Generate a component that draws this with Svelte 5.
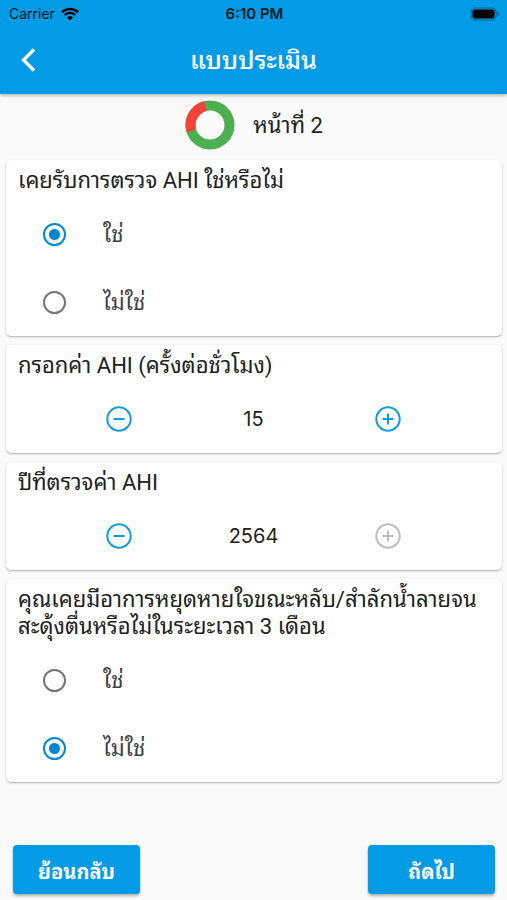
<script>
	const YEAR_MAX = 2564;

	let questions = $state([
		{ id: 'ahi-test', type: 'choice', title: 'เคยรับการตรวจ AHI ใช่หรือไม่', answer: 'ใช่' },
		{ id: 'ahi-value', type: 'number', title: 'กรอกค่า AHI (ครั้งต่อชั่วโมง)', value: 15, max: 200 },
		{ id: 'ahi-year', type: 'number', title: 'ปีที่ตรวจค่า AHI', value: 2564, max: YEAR_MAX },
		{
			id: 'apnea',
			type: 'choice',
			title: 'คุณเคยมีอาการหยุดหายใจขณะหลับ/สำลักน้ำลายจน\nสะดุ้งตื่นหรือไม่ในระยะเวลา 3 เดือน',
			answer: 'ไม่ใช่'
		}
	]);

	const options = ['ใช่', 'ไม่ใช่'];
</script>

<div class="screen">
	<header>
		<div class="status">
			<span class="carrier">
				Carrier
				<svg width="18" height="14" viewBox="0 0 18 14" aria-hidden="true">
					<path d="M1 5.2a11.5 11.5 0 0 1 16 0" />
					<path d="M3.8 8a7.5 7.5 0 0 1 10.4 0" />
					<path class="dot" d="M9 13.4 6.1 10.5a4.1 4.1 0 0 1 5.8 0z" />
				</svg>
			</span>
			<span class="time">6:10 PM</span>
			<svg class="battery" width="30" height="14" viewBox="0 0 30 14" aria-hidden="true">
				<rect class="shell" x="1" y="1" width="25" height="12" rx="3.5" />
				<rect x="2.5" y="2.5" width="22" height="9" rx="2" />
				<path class="cap" d="M27.5 4.5c2.4.8 2.4 4.2 0 5z" />
			</svg>
		</div>
		<div class="nav">
			<button class="back" aria-label="ย้อนกลับ">
				<svg width="18" height="26" viewBox="0 0 18 26">
					<path d="M15 1.5 4.5 12 15 22.5" />
				</svg>
			</button>
			<h1>แบบประเมิน</h1>
		</div>
	</header>

	<main>
		<div class="progress">
			<svg width="50" height="50" viewBox="0 0 50 50" aria-hidden="true">
				<circle class="done" cx="25" cy="25" r="19.5" />
				<circle
					class="left"
					cx="25"
					cy="25"
					r="19.5"
					pathLength="360"
					stroke-dasharray="94 266"
					transform="rotate(163 25 25)"
				/>
			</svg>
			<span>หน้าที่ 2</span>
		</div>

		{#each questions as q (q.id)}
			<section class="card" aria-labelledby={q.id}>
				<h2 id={q.id}>{q.title}</h2>
				{#if q.type === 'choice'}
					{#each options as option}
						<label class="option">
							<input type="radio" name={q.id + '-answer'} value={option} bind:group={q.answer} />
							<span>{option}</span>
						</label>
					{/each}
				{:else}
					<div class="counter">
						<button aria-label="ลด" disabled={q.value <= 0} onclick={() => q.value--}>
							<svg width="26" height="26" viewBox="0 0 26 26">
								<circle cx="13" cy="13" r="11.7" />
								<path d="M7.5 13h11" />
							</svg>
						</button>
						<output>{q.value}</output>
						<button aria-label="เพิ่ม" disabled={q.value >= q.max} onclick={() => q.value++}>
							<svg width="26" height="26" viewBox="0 0 26 26">
								<circle cx="13" cy="13" r="11.7" />
								<path d="M7.5 13h11M13 7.5v11" />
							</svg>
						</button>
					</div>
				{/if}
			</section>
		{/each}
	</main>

	<footer>
		<button>ย้อนกลับ</button>
		<button>ถัดไป</button>
	</footer>
</div>

<style>
	:global(body) {
		margin: 0;
		background: #fafafa;
	}

	.screen {
		display: flex;
		flex-direction: column;
		min-height: 100vh;
		font-family: Roboto, 'Noto Sans Thai Looped', Sarabun, Loma, Garuda, Waree, sans-serif;
		line-height: 27px;
		color: #212121;
	}

	button {
		font-family: inherit;
		border: none;
		cursor: pointer;
	}

	header {
		background: #039be5;
		box-shadow: 0 1px 4px rgba(0, 0, 0, 0.35);
	}

	.status {
		display: grid;
		grid-template-columns: 1fr auto 1fr;
		align-items: center;
		height: 27px;
		padding: 0 7px 0 9px;
		font-family: Inter, sans-serif;
		font-size: 14px;
		color: #0a1a24;
	}

	.carrier {
		display: flex;
		align-items: center;
		gap: 6px;
	}

	.carrier path {
		fill: none;
		stroke: #000;
		stroke-width: 2.4;
	}

	.carrier .dot {
		fill: #000;
		stroke: none;
	}

	.time {
		font-size: 15px;
		font-weight: 600;
	}

	.battery {
		justify-self: end;
	}

	.battery .shell {
		fill: none;
		stroke: #03608f;
	}

	.battery .cap {
		fill: #03608f;
	}

	.nav {
		display: grid;
		grid-template-columns: 56px 1fr 56px;
		align-items: center;
		height: 67px;
	}

	.back {
		display: flex;
		justify-content: center;
		padding: 0;
		background: none;
	}

	.back path {
		fill: none;
		stroke: #fff;
		stroke-width: 3.4;
	}

	h1 {
		margin: 0;
		font-size: 25px;
		font-weight: 500;
		text-align: center;
		color: #fff;
	}

	main {
		display: flex;
		flex-direction: column;
		gap: 9px;
		padding: 5px 5px 0 6px;
	}

	.progress {
		display: flex;
		align-items: center;
		justify-content: center;
		gap: 18px;
		height: 52px;
		font-size: 22px;
	}

	.progress circle {
		fill: none;
		stroke-width: 10;
	}

	.done {
		stroke: #4caf50;
	}

	.left {
		stroke: #f44336;
	}

	.card {
		background: #fff;
		border-radius: 5px;
		box-shadow: 0 1px 2px rgba(0, 0, 0, 0.3);
	}

	h2 {
		margin: 0;
		padding: 7px 12px 6px;
		font-size: 22px;
		font-weight: 400;
		white-space: pre-line;
	}

	.option {
		display: flex;
		align-items: center;
		gap: 37px;
		height: 68px;
		padding-left: 37px;
		font-size: 22px;
		color: #424242;
	}

	input {
		appearance: none;
		width: 23px;
		height: 23px;
		margin: 0;
		border: 2px solid #757575;
		border-radius: 50%;
	}

	input:checked {
		border-color: #0288d1;
		background: radial-gradient(circle, #0288d1 5px, transparent 6px);
	}

	.counter {
		display: flex;
		align-items: center;
		justify-content: space-between;
		height: 68px;
		padding: 0 101px 0 100px;
		font-family: Inter, sans-serif;
		font-size: 20px;
	}

	.counter button {
		display: flex;
		padding: 0;
		background: none;
		color: #119ce0;
	}

	.counter button:disabled {
		color: #bdbdbd;
		cursor: default;
	}

	.counter svg {
		fill: none;
		stroke: currentColor;
		stroke-width: 2;
	}

	footer {
		display: flex;
		justify-content: space-between;
		margin-top: auto;
		padding: 24px 12px 6px 13px;
	}

	footer button {
		width: 127px;
		height: 49px;
		border-radius: 4px;
		background: #039be5;
		box-shadow: 0 2px 3px rgba(0, 0, 0, 0.3);
		font-size: 20px;
		font-weight: 700;
		color: #fff;
	}
</style>
